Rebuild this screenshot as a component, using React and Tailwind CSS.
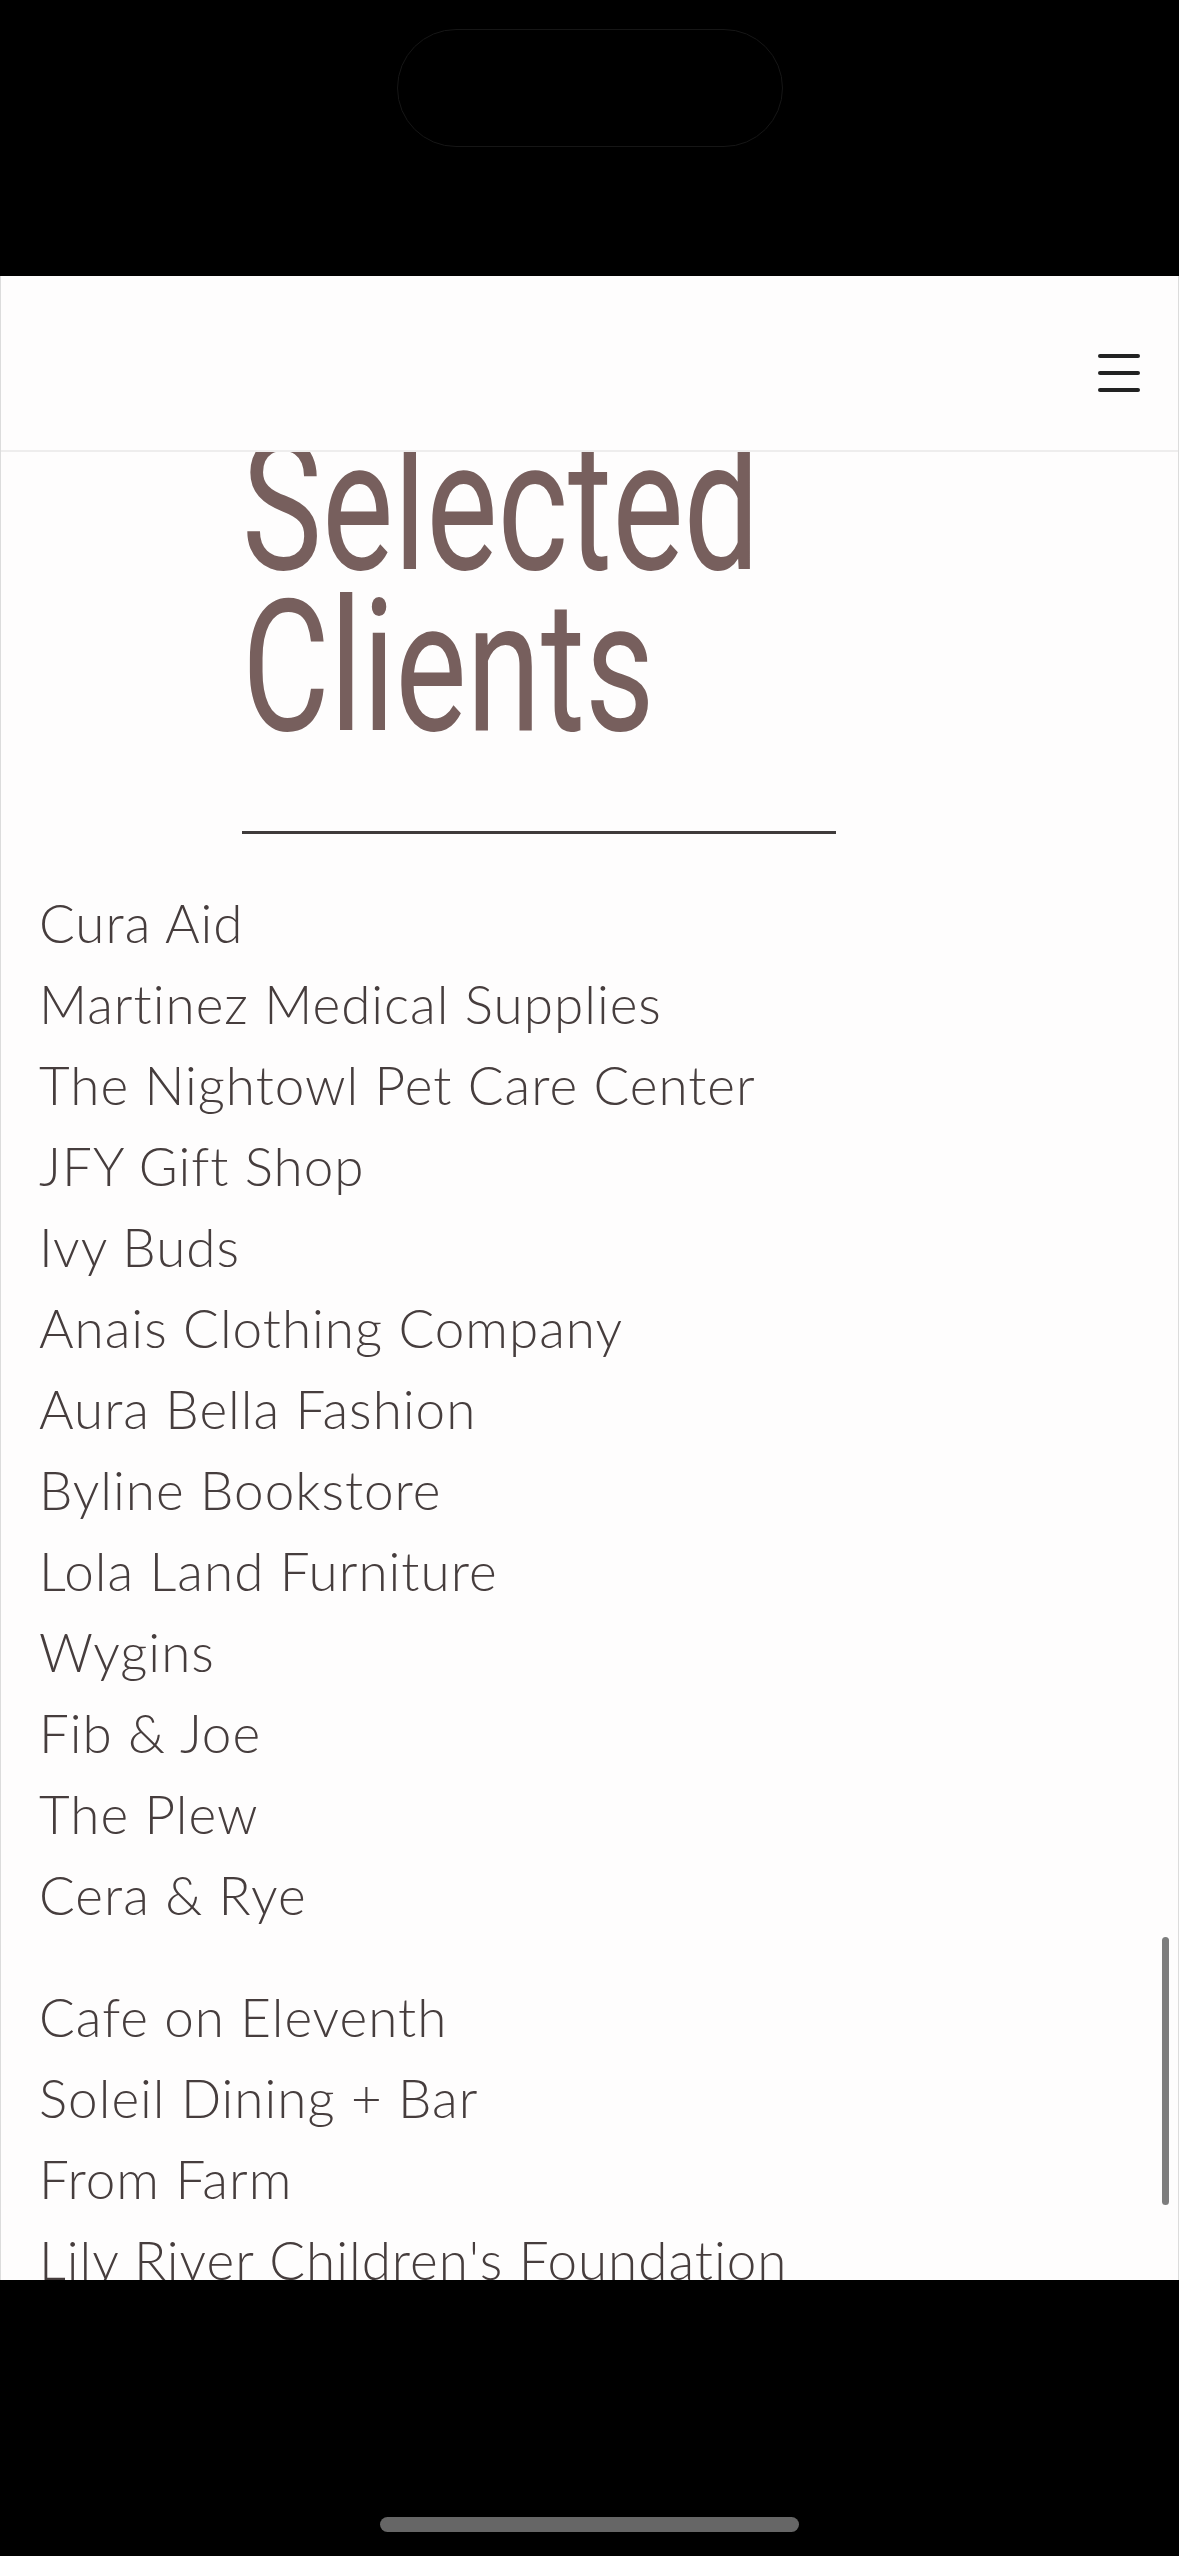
import React from "react";

const groupOne = [
  "Cura Aid",
  "Martinez Medical Supplies",
  "The Nightowl Pet Care Center",
  "JFY Gift Shop",
  "Ivy Buds",
  "Anais Clothing Company",
  "Aura Bella Fashion",
  "Byline Bookstore",
  "Lola Land Furniture",
  "Wygins",
  "Fib & Joe",
  "The Plew",
  "Cera & Rye",
];

const groupTwo = ["Cafe on Eleventh", "Soleil Dining + Bar", "From Farm", "Lily River Children's Foundation"];

function ClientList({ items, className = "" }) {
  return (
    <ul className={className}>
      {items.map((name) => (
        <li key={name} className="whitespace-nowrap">
          {name}
        </li>
      ))}
    </ul>
  );
}

export default function App() {
  return (
    <div className="w-[1179px] h-[2556px] bg-black flex flex-col overflow-hidden">
      {/* status area */}
      <div className="h-[276px] shrink-0 flex justify-center pt-[29px]">
        <div className="w-[386px] h-[118px] rounded-full border border-[#161616] bg-black" />
      </div>

      <div className="flex-1 flex flex-col bg-[#fefdfd] border-x border-[#dcdcdc] overflow-hidden">
        <header className="h-[176px] shrink-0 flex justify-end pt-[78px] pr-[38px] border-b-2 border-[#eeeded]">
          <button className="w-[42px] flex flex-col gap-[13px]">
            <span className="block h-[4px] rounded-full bg-[#222]" />
            <span className="block h-[4px] rounded-full bg-[#222]" />
            <span className="block h-[4px] rounded-full bg-[#222]" />
          </button>
        </header>

        <main className="relative flex-1 overflow-hidden">
          <div className="pl-[241px] -mt-[26px]">
            <h1
              className="text-[183px] leading-[161px] font-normal text-[#775f5d] origin-left scale-x-[0.736] whitespace-nowrap"
              style={{ fontFamily: "Roboto, sans-serif" }}
            >
              Selected
              <br />
              Clients
            </h1>
            <div className="mt-[83px] w-[594px] h-[3px] bg-[#3f3b3b]" />
          </div>

          <div
            className="pl-[38px] pt-[48px] text-[53px] leading-[81px] font-light tracking-[1px] text-[#463d3d] [font-variant-ligatures:none]"
            style={{ fontFamily: "Lato, sans-serif" }}
          >
            <ClientList items={groupOne} />
            <ClientList items={groupTwo} className="mt-[41px]" />
          </div>

          <div className="absolute right-[9px] top-[1485px] w-[7px] h-[268px] rounded-full bg-[#7d7d7d]" />
        </main>
      </div>

      {/* home indicator area */}
      <div className="h-[276px] shrink-0 flex justify-center pt-[237px]">
        <div className="w-[419px] h-[15px] rounded-full bg-[#666]" />
      </div>
    </div>
  );
}
